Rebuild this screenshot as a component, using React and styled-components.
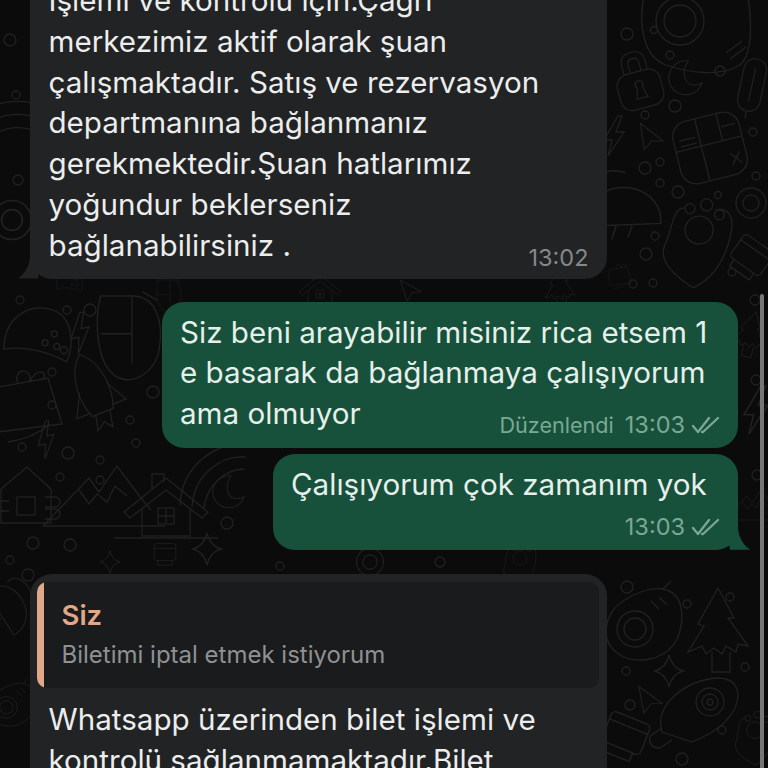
import React from "react";
import styled, { createGlobalStyle } from "styled-components";

const GlobalStyle = createGlobalStyle`
  html, body {
    margin: 0;
    padding: 0;
    background: #0b0b0b;
  }
`;

const shapes = {
  lock: (
    <>
      <rect x="-24" y="-18" width="48" height="40" rx="13" />
      <path d="M-13 -18 V-28 Q-13 -40 0 -40 Q13 -40 13 -28 V-18 M-6 -18 V-27 Q-6 -33 0 -33 Q6 -33 6 -27 V-18" />
      <path d="M0 -8 a4 4 0 0 1 3 7 L6 11 H-6 L-3 -1 a4 4 0 0 1 3 -7" />
    </>
  ),
  moon: <path d="M4 -20 A20 20 0 1 0 20 6 Q14 9 8 8 C-2 6 -4 -10 4 -20 Z" />,
  tile: (
    <>
      <rect x="-34" y="-32" width="68" height="64" rx="16" />
      <path d="M-34 -4 H34 M-8 -32 V32 M14 -32 V-4 M-28 -14 H-12 M-28 -8 H-12 M18 10 L28 22 M28 10 L18 22 M16 -18 H30" />
    </>
  ),
  bolt: <path d="M4 -20 L-10 4 L-2 4 L-6 20 L10 -4 L2 -4 L8 -20 Z" />,
  cursor: <path d="M-14 -14 L16 2 L3 4 L-4 16 Z" />,
  rocket: (
    <>
      <path d="M0 -44 C18 -28 20 0 12 22 H-12 C-20 0 -18 -28 0 -44 Z" />
      <path d="M-15 -6 L-28 18 L-12 18 M15 -6 L28 18 L12 18 M-8 22 L-12 38 L-2 32 L4 40 L8 22" />
    </>
  ),
  ship: (
    <>
      <path d="M-36 20 C-44 -8 -12 -32 20 -34 C40 -34 44 -18 36 -2 C26 16 8 24 -6 30 Z" />
      <circle cx="12" cy="-10" r="14" />
      <circle cx="12" cy="-10" r="8" />
      <circle cx="12" cy="-10" r="3" />
      <path d="M-36 16 L-48 24 Q-50 36 -38 36 L-26 28" />
    </>
  ),
  house: (
    <>
      <path d="M-42 8 L0 -26 L42 8 L36 14 L0 -14 L-36 14 Z" />
      <path d="M-24 4 V32 H24 V4 M-14 -14 V-30 H-2 V-22" />
      <rect x="-8" y="4" width="16" height="16" />
      <path d="M0 4 V20 M-8 12 H8 M-52 34 H52" />
    </>
  ),
  mountain: (
    <path d="M-62 30 L-16 -18 L-6 -4 L12 -30 L36 2 L46 14 M-26 -6 L-16 8 L-8 -2 L2 6 L10 -10 L22 0 M-62 30 H60" />
  ),
  cabin: (
    <>
      <path d="M-26 -8 L0 -30 L24 -8 M-26 -8 V26 H24 V-8" />
      <rect x="-10" y="0" width="18" height="18" />
      <path d="M-30 4 H-18 M-30 14 H-18 M18 0 h10 a5 5 0 0 1 0 10 h-10 M18 12 h10 a5 5 0 0 1 0 10 h-10" />
    </>
  ),
  tree: (
    <path d="M0 -44 L16 -14 L10 -14 L30 14 L20 12 L18 20 L8 14 L4 22 L-4 16 L-12 22 L-16 14 L-30 20 L-14 -6 L-20 -8 Z M-6 20 V40 H12 V20" />
  ),
  avocado: (
    <>
      <path d="M22 -36 C44 -32 44 -4 36 14 C26 34 -4 42 -24 28 C-42 14 -36 -12 -18 -24 C-6 -32 10 -38 22 -36 Z" />
      <circle cx="-6" cy="4" r="18" />
      <circle cx="-6" cy="4" r="11" />
      <path d="M22 -36 L30 -44 M10 -24 L18 -16 M18 -28 L26 -20" />
    </>
  ),
  paw: (
    <>
      <path d="M-16 -28 C-30 -28 -26 -6 -32 12 C-36 28 -20 40 2 50 C24 36 32 10 32 -14 C32 -30 22 -34 14 -30" />
      <circle cx="0" cy="-8" r="14" />
      <circle cx="-12" cy="-28" r="5" />
      <circle cx="4" cy="-34" r="6" />
      <circle cx="18" cy="-26" r="5" />
    </>
  ),
  sparkle: <path d="M0 -16 Q3 -3 14 0 Q3 3 0 16 Q-3 3 -14 0 Q-3 -3 0 -16 Z" />,
  pill: (
    <>
      <rect x="-12" y="-28" width="24" height="56" rx="12" />
      <path d="M0 -18 V18 M0 28 V36" />
    </>
  ),
  capsule: (
    <>
      <path d="M-30 -40 H0 C24 -40 30 -14 26 10 C22 34 0 46 -16 36 C-34 24 -36 -16 -30 -40 Z" />
      <path d="M-30 -4 H0 M0 -40 V24 M10 -44 L24 -36" />
    </>
  ),
  taco: (
    <>
      <path d="M-34 18 C-38 -14 -16 -30 6 -28 C28 -26 36 0 30 22 C10 14 -14 12 -34 18 Z" />
      <circle cx="14" cy="-4" r="3" />
      <circle cx="6" cy="6" r="3" />
      <circle cx="18" cy="8" r="3" />
    </>
  ),
  gift: (
    <>
      <path d="M-34 -14 L20 -24 L34 22 L-30 30 Z" />
      <path d="M-10 -18 C-16 -34 4 -36 2 -20 C8 -36 22 -30 14 -22 M-20 40 Q6 36 22 22" />
    </>
  ),
  smile: (
    <>
      <path d="M-34 -48 C-44 -10 -36 22 -14 30 C10 38 40 42 60 30 C76 16 70 -30 66 -48" />
      <circle cx="0" cy="-14" r="24" />
      <circle cx="0" cy="-14" r="16" />
      <path d="M46 18 L62 6 M50 24 L66 12" />
    </>
  ),
  shell: (
    <>
      <path d="M-36 4 C-30 -20 16 -24 26 6 L27 16 L-26 18 Z" />
      <path d="M-34 -10 C-40 -24 -20 -34 -4 -28 M-26 18 L-34 34 M-12 18 L-16 30 M2 18 L-2 28" />
    </>
  ),
  burst: (
    <>
      <rect x="-18" y="-14" width="36" height="28" rx="4" />
      <path d="M-18 -6 H18 M-12 14 V22 H12 V14" />
    </>
  ),
  nut: (
    <>
      <circle r="15" />
      <circle r="8" />
    </>
  ),
  arcs: <path d="M-32 30 C-30 -10 4 -34 36 -30 M-20 32 C-18 0 8 -20 34 -18 M-8 34 C-6 10 14 -6 32 -6" />,
};

const doodles = [
  ["smile", 680, 35, 0, 1],
  ["lock", 640, 88, -15, 0.92],
  ["moon", 685, 78, 0, 0.85],
  ["pill", 752, 85, 12, 0.95],
  ["tile", 710, 148, -14, 1],
  ["bolt", 614, 136, 0, 1],
  ["cursor", 650, 137, 10, 0.85],
  ["shell", 630, 205, 0, 1.15],
  ["paw", 698, 238, 8, 1],
  ["nut", 751, 203, 0, 1],
  ["burst", 752, 255, 35, 1],
  ["gift", 620, 275, 0, 0.35],
  ["taco", 40, 336, 8, 1],
  ["bolt", 80, 333, -12, 1],
  ["capsule", 132, 338, 0, 1.05],
  ["gift", 28, 402, 0, 1],
  ["rocket", 95, 393, -22, 0.95],
  ["bolt", 46, 440, -14, 0.9],
  ["cabin", 27, 497, 0, 1],
  ["mountain", 105, 496, 0, 1],
  ["house", 166, 504, 0, 1],
  ["arcs", 212, 475, 0, 1],
  ["moon", 228, 492, 0, 0.8],
  ["sparkle", 207, 549, 0, 1],
  ["burst", 165, 552, 0, 0.6],
  ["taco", 70, 282, 0, 0.4],
  ["capsule", 170, 296, 0, 0.4],
  ["house", 320, 288, 0, 0.5],
  ["cursor", 410, 290, 0, 0.7],
  ["tree", 560, 288, 0, 0.5],
  ["sparkle", 110, 562, 0, 0.7],
  ["nut", 370, 562, 0, 0.9],
  ["paw", 520, 562, 0, 0.5],
  ["avocado", 641, 625, 0, 1],
  ["tree", 718, 632, 0, 1],
  ["sparkle", 669, 671, 0, 1],
  ["cursor", 649, 700, 8, 0.85],
  ["ship", 698, 712, 0, 1],
  ["burst", 626, 733, 22, 1.15],
  ["bolt", 756, 410, 0, 1.2],
  ["tree", 750, 335, 15, 0.55],
  ["mountain", 755, 505, 0, 0.5],
  ["shell", 14, 610, 60, 0.8],
  ["avocado", 10, 705, 0, 0.6],
  ["arcs", 14, 120, 40, 1],
  ["nut", 12, 220, 0, 1.3],
  ["paw", 755, 735, 0, 0.6],
];

const rings = [
  [627, 34, 6], [654, 30, 3.5], [670, 55, 4], [720, 71, 5], [675, 106, 6], [645, 115, 4],
  [753, 132, 4], [645, 168, 6], [660, 162, 4], [660, 183, 4], [678, 192, 6], [718, 195, 3.5],
  [756, 176, 4], [655, 236, 4], [646, 254, 6], [732, 272, 4], [633, 284, 4], [653, 283, 4],
  [67, 310, 4], [90, 310, 6], [52, 372, 4], [64, 350, 3.5], [52, 405, 4], [22, 447, 4],
  [68, 453, 6], [100, 460, 4], [136, 443, 4], [100, 480, 4], [60, 477, 4], [33, 543, 6],
  [70, 545, 6], [227, 523, 6], [153, 392, 6], [130, 420, 4], [627, 587, 6], [687, 604, 4],
  [730, 597, 4], [626, 671, 4], [745, 667, 4], [630, 705, 5], [722, 730, 4], [682, 759, 6],
  [10, 560, 4], [28, 575, 6], [20, 300, 4], [755, 300, 5], [756, 380, 5], [757, 475, 5],
  [10, 40, 6], [16, 95, 4], [18, 180, 5], [280, 566, 4], [440, 562, 5],
];

const Page = styled.div`
  position: relative;
  width: 768px;
  height: 768px;
  overflow: hidden;
  background: #0b0b0b;
  font-family: Inter, "Noto Sans", "Liberation Sans", sans-serif;
`;

const Wallpaper = styled.svg`
  position: absolute;
  inset: 0;
  fill: none;
  stroke: #212121;
  stroke-width: 1.3;
`;

const Thread = styled.div`
  position: relative;
  display: flex;
  flex-direction: column;
  padding: 0 30px;
  margin-top: -20px;
`;

const Bubble = styled.div`
  position: relative;
  box-sizing: border-box;
  align-self: ${(p) => (p.$out ? "flex-end" : "flex-start")};
  width: ${(p) => p.$width}px;
  margin-top: ${(p) => p.$gap || 0}px;
  padding: ${(p) => (p.$out ? "10px 18px 10px" : "0 18.5px 8px")};
  border-radius: 22px;
  background: ${(p) => (p.$out ? "#17513c" : "#212324")};
  color: ${(p) => (p.$out ? "#e6f0eb" : "#eceded")};

  &::after {
    content: ${(p) => (p.$tail ? '""' : "none")};
    position: absolute;
    bottom: 0;
    ${(p) => (p.$out ? "right: -12px;" : "left: -12px;")}
    width: 24px;
    height: 24px;
    background: inherit;
    clip-path: ${(p) =>
      p.$out
        ? "path('M0 0 H12 C12 10 16 18 24 24 L4 24 Z')"
        : "path('M24 0 H12 C12 10 8 18 0 24 L20 24 Z')"};
  }
`;

const Line = styled.div`
  font-size: 29.6px;
  line-height: 40.8px;
  white-space: nowrap;
`;

const Meta = styled.div`
  display: flex;
  justify-content: flex-end;
  align-items: center;
  gap: 6px;
  height: 26px;
  margin-top: ${(p) => p.$shift || 0}px;
  font-size: 23.5px;
  color: ${(p) => (p.$out ? "#7ba893" : "#84888a")};
`;

const Edited = styled.span`
  margin-right: 5px;
  font-size: 21.6px;
`;

const Checks = styled.svg`
  width: 29px;
  height: 18px;
  fill: none;
  stroke: #7ba893;
  stroke-width: 2.3;
  stroke-linecap: round;
  stroke-linejoin: round;
`;

const Quote = styled.div`
  position: relative;
  box-sizing: border-box;
  height: 106px;
  margin: 0 -10px 0 -12px;
  padding: 17px 18px 0 25px;
  border-radius: 10px;
  background: #1a1b1c;
  overflow: hidden;

  &::before {
    content: "";
    position: absolute;
    left: 0;
    top: 0;
    bottom: 0;
    width: 7px;
    background: #e0a789;
    border-radius: 8px 0 0 8px;
  }
`;

const QuoteName = styled.div`
  font-size: 27.5px;
  line-height: 32px;
  font-weight: 600;
  color: #e0a789;
`;

const QuoteText = styled.div`
  margin-top: 10px;
  font-size: 24px;
  line-height: 28px;
  white-space: nowrap;
  color: #8f9192;
`;

const ReplyBubble = styled(Bubble)`
  padding-top: 8px;
`;

const Body = styled.div`
  padding-top: 11px;
`;

const Scrollbar = styled.div`
  position: absolute;
  right: 4px;
  top: 294px;
  bottom: 0;
  width: 4px;
  border-radius: 2px 2px 0 0;
  background: #767676;
`;

const DoubleCheck = () => (
  <Checks viewBox="0 0 29 18">
    <path d="M2 10 L7 16 L18 2" />
    <path d="M11 16 H12 L27 2" />
  </Checks>
);

export default function App() {
  return (
    <Page>
      <GlobalStyle />
      <Wallpaper viewBox="0 0 768 768">
        {doodles.map(([kind, x, y, r, s], i) => (
          <g key={i} transform={`translate(${x} ${y}) rotate(${r}) scale(${s})`}>
            {shapes[kind]}
          </g>
        ))}
        {rings.map(([x, y, r], i) => (
          <circle key={i} cx={x} cy={y} r={r} />
        ))}
      </Wallpaper>

      <Thread>
        <Bubble $width={577} $tail>
          <Line>İşlemi ve kontrolü için.Çağrı</Line>
          <Line>merkezimiz aktif olarak şuan</Line>
          <Line>çalışmaktadır. Satış ve rezervasyon</Line>
          <Line>departmanına bağlanmanız</Line>
          <Line>gerekmektedir.Şuan hatlarımız</Line>
          <Line>yoğundur beklerseniz</Line>
          <Line>bağlanabilirsiniz .</Line>
          <Meta $shift={-21}>13:02</Meta>
        </Bubble>

        <Bubble $out $width={576} $gap={23}>
          <Line>Siz beni arayabilir misiniz rica etsem 1</Line>
          <Line>e basarak da bağlanmaya çalışıyorum</Line>
          <Line>ama olmuyor</Line>
          <Meta $out $shift={-22}>
            <Edited>Düzenlendi</Edited>
            13:03
            <DoubleCheck />
          </Meta>
        </Bubble>

        <Bubble $out $tail $width={465} $gap={6}>
          <Line>Çalışıyorum çok zamanım yok</Line>
          <Meta $out $shift={9}>
            13:03
            <DoubleCheck />
          </Meta>
        </Bubble>

        <ReplyBubble $width={577} $gap={24}>
          <Quote>
            <QuoteName>Siz</QuoteName>
            <QuoteText>Biletimi iptal etmek istiyorum</QuoteText>
          </Quote>
          <Body>
            <Line>Whatsapp üzerinden bilet işlemi ve</Line>
            <Line>kontrolü sağlanmamaktadır.Bilet</Line>
          </Body>
        </ReplyBubble>
      </Thread>
      <Scrollbar />
    </Page>
  );
}
